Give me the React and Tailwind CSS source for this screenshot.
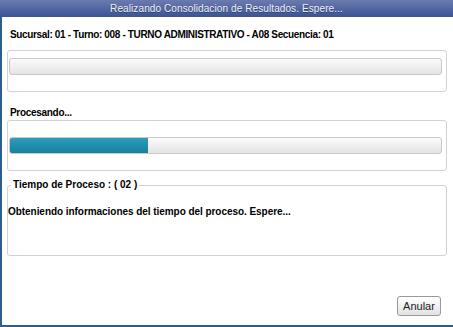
import React from 'react';

const font = { fontFamily: '"Liberation Sans", Arial, sans-serif' };

function ProgressBar({ percent }) {
  return (
    <div className="h-[17px] rounded-[3px] border border-[#c9c9c9] bg-gradient-to-b from-[#fbfbfb] to-[#e4e4e4] overflow-hidden">
      {percent > 0 && (
        <div
          className="h-full bg-gradient-to-b from-[#2a9dba] to-[#17809f]"
          style={{ width: `${percent}%` }}
        />
      )}
    </div>
  );
}

export default function App() {
  return (
    <div
      className="w-[453px] h-[327px] bg-white border-l-2 border-b-2 border-[#2a5f8e] flex flex-col text-[10px] leading-[14px] text-black"
      style={font}
    >
      {/* Title bar */}
      <div className="h-[17px] -ml-[2px] bg-gradient-to-b from-[#6b7bae] to-[#3b5394] flex items-center justify-center text-[#eef1f8] text-[10px] tracking-[0.1px] [text-shadow:0_1px_0_rgba(0,0,0,0.35)]">
        Realizando Consolidacion de Resultados. Espere...
      </div>

      <div className="mt-[11px] pl-[8px] font-bold h-[14px] tracking-[-0.35px]">
        Sucursal: 01 - Turno: 008 - TURNO ADMINISTRATIVO - A08 Secuencia: 01
      </div>

      <div className="mt-[8px] ml-[5px] w-[440px] h-[42px] rounded-[3px] border border-[#d2d2d2] pt-[7px] pl-[1px] pr-[4px]">
        <ProgressBar percent={0} />
      </div>

      <div className="mt-[14px] pl-[8px] font-bold h-[14px] tracking-[-0.3px]">Procesando...</div>

      <div className="ml-[5px] w-[440px] h-[51px] rounded-[3px] border border-[#d2d2d2] pt-[16px] pl-[1px] pr-[4px]">
        <ProgressBar percent={32} />
      </div>

      <fieldset className="mt-[7px] ml-[5px] w-[440px] h-[78px] rounded-[3px] border border-[#d2d2d2]">
        <legend className="ml-[3px] px-[2px] font-bold">Tiempo de Proceso : ( 02 )</legend>
        <div className="mt-[13px] pl-[0px] font-bold tracking-[-0.05px]">
          Obteniendo informaciones del tiempo del proceso. Espere...
        </div>
      </fieldset>

      <div className="flex-1 flex items-end justify-end pr-[12px] pb-[9px]">
        <button className="w-[44px] h-[20px] rounded-[3px] border border-[#9a9a9a] bg-gradient-to-b from-[#ffffff] to-[#e2e2e2] text-[11px] text-[#222]">
          Anular
        </button>
      </div>
    </div>
  );
}
